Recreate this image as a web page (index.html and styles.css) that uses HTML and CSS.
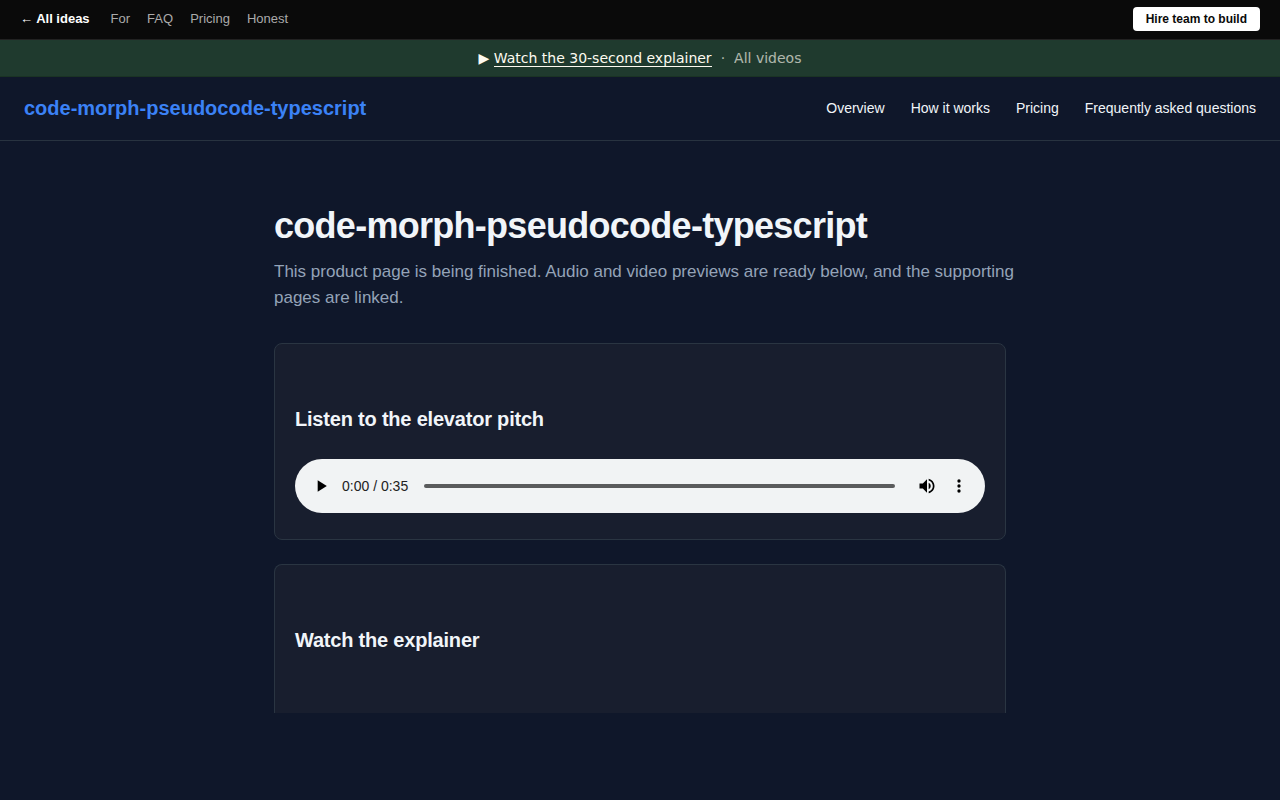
FILE: index.html
```html
<!DOCTYPE html>
<html lang="en">
<head>
  <meta charset="UTF-8">
  <meta name="viewport" content="width=device-width, initial-scale=1.0">
  <title>code-morph-pseudocode-typescript</title>
  <link rel="stylesheet" href="styles.css">
</head>
<body>
  <div class="topbar">
    <nav class="topbar-links" aria-label="Ideas">
      <a href="#" class="topbar-home">← All ideas</a>
      <a href="#">For</a>
      <a href="#">FAQ</a>
      <a href="#">Pricing</a>
      <a href="#">Honest</a>
    </nav>
    <a href="#" class="hire-link">Hire team to build</a>
  </div>

  <div class="video-banner">
    <span>▶ <a href="#watch" class="banner-watch">Watch the 30-second explainer</a></span>
    <span class="banner-dot">·</span>
    <a href="#" class="banner-all">All videos</a>
  </div>

  <header class="site-header">
    <a href="#" class="brand">code-morph-pseudocode-typescript</a>
    <nav class="site-nav" aria-label="Main">
      <a href="#">Overview</a>
      <a href="#">How it works</a>
      <a href="#">Pricing</a>
      <a href="#">Frequently asked questions</a>
    </nav>
  </header>

  <main class="content">
    <h1>code-morph-pseudocode-typescript</h1>
    <p class="lead">This product page is being finished. Audio and video previews are ready below, and the supporting pages are linked.</p>

    <section class="card">
      <h2>Listen to the elevator pitch</h2>
      <div class="player">
        <button type="button" class="player-button" aria-label="Play">
          <svg viewBox="0 0 24 24" width="20" height="20"><path d="M8 5v14l11-7z"/></svg>
        </button>
        <span class="player-time">0:00 / 0:35</span>
        <input type="range" class="player-seek" min="0" max="35" value="0" aria-label="Seek">
        <button type="button" class="player-button" aria-label="Mute">
          <svg viewBox="0 0 24 24" width="20" height="20"><path d="M3 9v6h4l5 5V4L7 9H3zm13.5 3A4.5 4.5 0 0 0 14 7.97v8.05A4.47 4.47 0 0 0 16.5 12zM14 3.23v2.06c2.89.86 5 3.54 5 6.71s-2.11 5.85-5 6.71v2.06c4.01-.91 7-4.49 7-8.77s-2.99-7.86-7-8.77z"/></svg>
        </button>
        <button type="button" class="player-button" aria-label="More options">
          <svg viewBox="0 0 24 24" width="20" height="20"><path d="M12 8a2 2 0 1 0 0-4 2 2 0 0 0 0 4zm0 2a2 2 0 1 0 0 4 2 2 0 0 0 0-4zm0 6a2 2 0 1 0 0 4 2 2 0 0 0 0-4z"/></svg>
        </button>
      </div>
    </section>

    <section class="card card-open" id="watch">
      <h2>Watch the explainer</h2>
    </section>
  </main>
</body>
</html>
```
FILE: styles.css
```css
* {
  margin: 0;
  padding: 0;
  box-sizing: border-box;
}

body {
  font-family: "Liberation Sans", Arial, sans-serif;
  font-size: 16px;
  background: #0f172a;
  color: #f1f5f9;
}

a {
  color: inherit;
  text-decoration: none;
}

.topbar {
  display: flex;
  align-items: center;
  justify-content: space-between;
  padding: 7px 20px 8px;
  background: #0a0a0a;
  border-bottom: 1px solid #222;
  font-size: 13px;
}

.topbar-links {
  display: flex;
  gap: 17px;
  color: #aaa;
  line-height: 24px;
}

.topbar-home {
  margin-right: 4px;
  color: #fff;
  font-weight: 700;
}

.hire-link {
  padding: 5px 13px;
  background: #fff;
  border-radius: 4px;
  color: #0a0a0a;
  font-size: 12px;
  font-weight: 700;
  line-height: 14px;
}

.video-banner {
  display: flex;
  justify-content: center;
  gap: 9px;
  padding: 8px 16px;
  background: #1f3a2e;
  border-bottom: 1px solid #1a3324;
  color: #fdfaf0;
  font-family: "DejaVu Sans", sans-serif;
  font-size: 14px;
  line-height: 20px;
}

.banner-watch {
  border-bottom: 1px solid #fdfaf0;
}

.banner-dot,
.banner-all {
  opacity: 0.65;
}

.site-header {
  display: flex;
  align-items: center;
  justify-content: space-between;
  padding: 16px 24px;
  border-bottom: 1px solid #283340;
  line-height: 31px;
}

.brand {
  color: #3b82f6;
  font-size: 20px;
  font-weight: 700;
}

.site-nav {
  display: flex;
  gap: 26px;
  font-size: 14px;
}

.content {
  max-width: 780px;
  margin: 0 auto;
  padding: 64px 24px;
}

h1 {
  margin-bottom: 12px;
  font-size: 36px;
  line-height: 42px;
  letter-spacing: -0.02em;
}

.lead {
  margin: 0 -12px 32px 0;
  color: #94a3b8;
  font-size: 17px;
  line-height: 26px;
}

.card {
  margin-bottom: 24px;
  padding: 20px 20px 26px;
  background: #181e2e;
  border: 1px solid #2a3542;
  border-radius: 8px;
}

.card-open {
  padding-bottom: 33px;
  border-bottom: 0;
  border-radius: 8px 8px 0 0;
}

h2 {
  margin: 42px 0 27px;
  font-size: 20px;
  line-height: 26px;
  letter-spacing: -0.01em;
}

.player {
  display: flex;
  align-items: center;
  height: 54px;
  padding: 0 10px;
  background: #f1f3f4;
  border-radius: 27px;
}

.player-button {
  display: flex;
  align-items: center;
  justify-content: center;
  width: 32px;
  height: 32px;
  background: none;
  border: 0;
  cursor: pointer;
}

.player-time {
  margin: 0 16px 0 5px;
  color: #222;
  font-size: 14px;
}

.player-seek {
  flex: 1;
  min-width: 0;
  height: 4px;
  margin-right: 16px;
  appearance: none;
  background: #5a5b5c;
  border-radius: 2px;
}

.player-seek::-webkit-slider-thumb {
  appearance: none;
  width: 0;
  height: 0;
}
```
